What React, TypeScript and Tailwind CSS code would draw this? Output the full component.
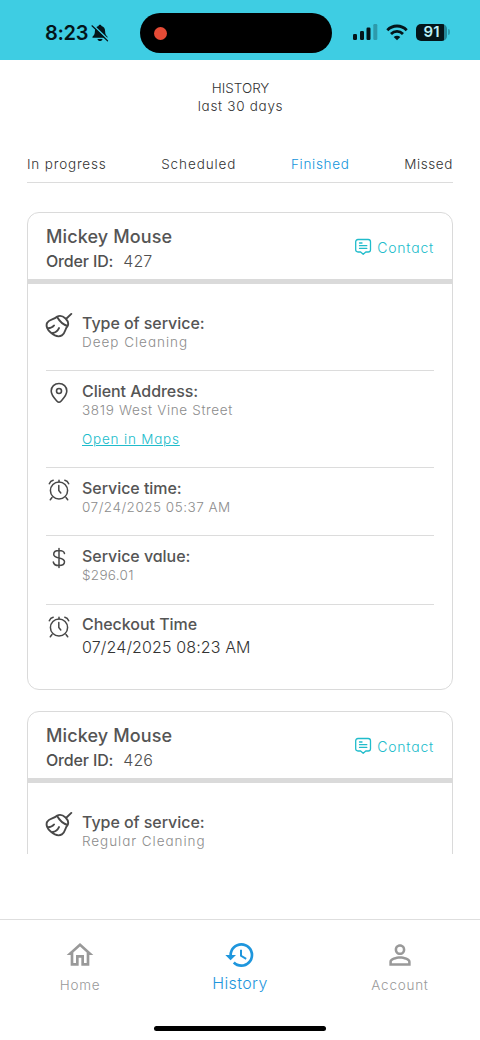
import type { ReactNode } from "react";
import { MdHistory, MdOutlineHome, MdPersonOutline } from "react-icons/md";

const stroke = {
  fill: "none",
  stroke: "currentColor",
  strokeLinecap: "round" as const,
  strokeLinejoin: "round" as const,
};

function Brush() {
  return (
    <svg className="shrink-0" width="28" height="26" viewBox="0 0 28 26" strokeWidth="1.9" {...stroke}>
      <path d="M21 7 26.300 1.900M12 4.800C15 2.900 18 4.200 20.600 6.500c2.300 2.400 3.300 5 2 7.500M12 4.800c2.500 4.500 6 8 10.600 9.200M12 4.800C8.500 8 4.500 7.200 2.200 10.800c-1.700 3 .4 7.200 3.500 9.800 3.600 3.100 8.200 4.600 11.200 2.800 3.700-2.300 2.500-5.800 5.700-9.400M3 16.300c2.300 0 4.500-1 6-2.800M7.700 21c3-.4 5-2.200 6.300-4.900" />
    </svg>
  );
}

function Pin() {
  return (
    <svg width="20" height="22" viewBox="0 0 20 22" strokeWidth="1.600" {...stroke}>
      <path d="M10 1.500c-4.500 0-7.800 3.300-7.800 7.500 0 4.200 3.400 7.500 5.900 10.300 1.100 1.300 2.700 1.300 3.800 0 2.500-2.800 5.900-6.100 5.900-10.300 0-4.200-3.300-7.500-7.800-7.500Z" />
      <circle cx="10" cy="9" r="2.500" />
    </svg>
  );
}

function Alarm() {
  return (
    <svg width="22" height="22" viewBox="0 0 22 22" strokeWidth="1.500" {...stroke}>
      <circle cx="11" cy="11.500" r="8.600" />
      <path d="M10.800 6.500v5l2 2.500M11 1.300v1.500M1.300 4.700C2 3 3.200 1.800 5.200 1.300M20.700 4.700c-.7-1.700-1.900-2.900-3.900-3.400M4 18.500l-1.700 2.300M18 18.500l1.700 2.300" />
    </svg>
  );
}

function Dollar() {
  return (
    <svg width="14" height="22" viewBox="0 0 14 22" strokeWidth="1.500" {...stroke}>
      <path d="M7 1.500v19M12.500 6.500C12 4.500 10 3.500 7 3.500S1.700 4.800 1.700 7.200c0 5.200 10.800 2.300 10.800 7.600 0 2.400-2.300 3.800-5.500 3.800s-5.300-1.300-5.700-3.600" />
    </svg>
  );
}

function Message() {
  return (
    <svg width="18" height="18" viewBox="0 0 18 18" strokeWidth="1.300" {...stroke}>
      <path d="M4 1.500h10.200c1.500 0 2.300.8 2.300 2.300v7.900c0 1.500-.8 2.300-2.300 2.300h-2.400L9.200 16.300 6.600 14H4c-1.500 0-2.300-.8-2.300-2.300V3.800C1.700 2.300 2.500 1.500 4 1.500ZM5.500 5H8M5.500 7.700h7.300M5.500 10.400h7.300" />
    </svg>
  );
}

function StatusBar() {
  return (
    <header className="flex h-[60px] shrink-0 items-start bg-[#3ecde3] pt-[13px] text-[#04151a]">
      <div className="flex h-10 w-[140px] items-center pl-[45px]">
        <span className="w-[46px] text-[20px] font-semibold tracking-[-0.300px]">8:23</span>
        <svg width="18" height="18" viewBox="0 0 18 18">
          <path d="M9 .8c.9 0 1.500.6 1.500 1.300 2.400.7 3.600 2.600 3.600 5 0 3 .8 4.200 2.200 5.400.6.500.3 1.300-.4 1.300H2.100c-.7 0-1-.8-.4-1.300 1.400-1.200 2.200-2.400 2.200-5.400 0-2.400 1.200-4.300 3.600-5C7.500 1.400 8.100.8 9 .8ZM6.500 14.900h5c-.2 1.300-1.300 2.200-2.500 2.200s-2.300-.9-2.500-2.200Z" fill="currentColor" />
          <path d="M2 1.200 17.500 16" stroke="#3ecde3" strokeWidth="1.600" />
          <path d="M1 1.800 16.500 16.800" stroke="currentColor" strokeWidth="1.200" strokeLinecap="round" />
        </svg>
      </div>
      <div className="flex h-10 w-48 items-center rounded-full bg-black pl-[14px]">
        <span className="size-[13px] rounded-full bg-[#e54b36]" />
      </div>
      <div className="flex h-[38px] items-center pl-[21px]">
        <svg width="25" height="16" viewBox="0 0 25 16" fill="currentColor">
          <rect x="0" y="10" width="4" height="6" rx="1.200" />
          <rect x="7" y="7" width="4" height="9" rx="1.200" />
          <rect x="13.500" y="3.500" width="4" height="12.500" rx="1.200" />
          <rect x="20.300" y="0" width="4" height="16" rx="1.200" opacity=".28" />
        </svg>
        <svg className="ml-2" width="22" height="17" viewBox="0 0 22 17" fill="none" stroke="currentColor" strokeWidth="2.800">
          <path d="M1.300 6.200C6.700.6 15.300.6 20.700 6.200M5 10c3.400-3.400 8.600-3.400 12 0" />
          <path d="M11 16.300 7.700 13c1.800-1.700 4.800-1.700 6.600 0Z" fill="currentColor" stroke="none" />
        </svg>
        <div className="ml-2 flex h-[17px] w-[31px] items-center justify-center rounded-[5px] bg-[linear-gradient(to_right,#04151a_91%,#258596_91%)] text-[15px] leading-[18px] font-semibold text-[#b9eff7]">
          91
        </div>
        <span className="ml-[1px] h-[6px] w-[2px] rounded-r-full bg-[#2c9cae]" />
      </div>
    </header>
  );
}

function Row({ icon, label, last, children }: { icon: ReactNode; label: string; last?: boolean; children: ReactNode }) {
  return (
    <div className={last ? "flex pt-[10px]" : "flex border-b border-[#dcdcdc] pt-[10px] pb-[18px]"}>
      <div className="flex h-6 w-[36px] shrink-0 items-center justify-center pr-[10px] text-[#484848]">{icon}</div>
      <div>
        <div className="-mt-[0.500px] mb-[0.500px] text-[16px] leading-[20px] font-medium tracking-[-0.050px] text-[#555]">{label}</div>
        {children}
      </div>
    </div>
  );
}

function Value({ children }: { children: ReactNode }) {
  return <div className="text-[13.500px] leading-[19.300px] font-light tracking-[0.600px] text-[#8c8c8c]">{children}</div>;
}

function Card({ id, children }: { id: string; children: ReactNode }) {
  return (
    <article className="rounded-xl border border-[#dadada]">
      <div className="flex h-[71px] items-start justify-between border-b-[5px] border-[#dadada] pt-3 pr-[18px] pl-[18px]">
        <div>
          <div className="text-[18px] leading-6 font-medium tracking-[0.120px] text-[#555]">Mickey Mouse</div>
          <div className="flex gap-[10px] text-[16px] leading-6 text-[#505050]">
            <span className="font-medium tracking-[-0.150px]">Order ID:</span>
            <span className="font-light">{id}</span>
          </div>
        </div>
        <div className="flex h-[44px] items-center gap-[5px] text-[14px] font-light tracking-[0.800px] text-[#20bccb]">
          <Message />
          Contact
        </div>
      </div>
      <div className="px-[18px] pt-[19px]">{children}</div>
    </article>
  );
}

export default function App() {
  return (
    <div className="flex h-[1040px] w-[480px] flex-col overflow-hidden bg-white font-['Inter',sans-serif] [font-feature-settings:'cv11']">
      <StatusBar />
      <div className="mt-[19px] text-center text-[13.500px] leading-[18px] font-light text-[#333]">
        <h1 className="pl-px">HISTORY</h1>
        <p className="pl-px tracking-[0.700px]">last 30 days</p>
      </div>
      <nav className="mx-[27px] mt-[39px] flex h-[29px] shrink-0 justify-between border-b border-[#dcdcdc] text-[13.500px] leading-5 font-light tracking-[0.700px] text-[#333]">
        <span className="tracking-[0.820px]">In progress</span>
        <span className="tracking-[0.900px]">Scheduled</span>
        <span className="text-[#1295dc]">Finished</span>
        <span className="tracking-[0.600px]">Missed</span>
      </nav>
      <main className="mx-[27px] mt-[29px] flex h-[642px] shrink-0 flex-col gap-[21px] overflow-hidden">
        <div className="h-[478px] shrink-0 [&>article]:h-full">
          <Card id="427">
            <Row icon={<Brush />} label="Type of service:">
              <Value><span className="tracking-[0.980px]">Deep Cleaning</span></Value>
            </Row>
            <Row icon={<Pin />} label="Client Address:">
              <Value><span className="tracking-[0.650px]">3819 West Vine Street</span></Value>
              <div className="mt-[9px] text-[13.500px] leading-[19.400px] font-light tracking-[0.800px] text-[#20bccb] underline">Open in Maps</div>
            </Row>
            <Row icon={<Alarm />} label="Service time:">
              <Value><span className="tracking-[0.500px]">07/24/2025 05:37 AM</span></Value>
            </Row>
            <Row icon={<Dollar />} label="Service value:">
              <Value><span className="tracking-[0.300px]">$296.01</span></Value>
            </Row>
            <Row icon={<Alarm />} label="Checkout Time" last>
              <div className="text-[16px] leading-[25px] font-light tracking-[0.130px] text-[#333]">07/24/2025 08:23 AM</div>
            </Row>
          </Card>
        </div>
        <Card id="426">
          <Row icon={<Brush />} label="Type of service:">
            <Value><span className="tracking-[0.950px]">Regular Cleaning</span></Value>
          </Row>
        </Card>
      </main>
      <footer className="mt-[65px] flex flex-1 flex-col border-t border-[#dedede]">
        <div className="grid grid-cols-3 pt-[19px] text-[13.500px] font-light tracking-[0.750px] text-[#999]">
          <div className="flex flex-col items-center">
            <MdOutlineHome size={32} />
            <span className="mt-[4px] leading-5">Home</span>
          </div>
          <div className="flex flex-col items-center text-[#1e96dd]">
            <MdHistory size={32} />
            <span className="mt-[2px] text-[16px] leading-5 tracking-[0.400px]">History</span>
          </div>
          <div className="flex flex-col items-center">
            <MdPersonOutline size={32} />
            <span className="mt-[4px] leading-5">Account</span>
          </div>
        </div>
        <div className="mt-auto mb-[9px] h-[5px] w-[172px] self-center rounded-full bg-black" />
      </footer>
    </div>
  );
}
